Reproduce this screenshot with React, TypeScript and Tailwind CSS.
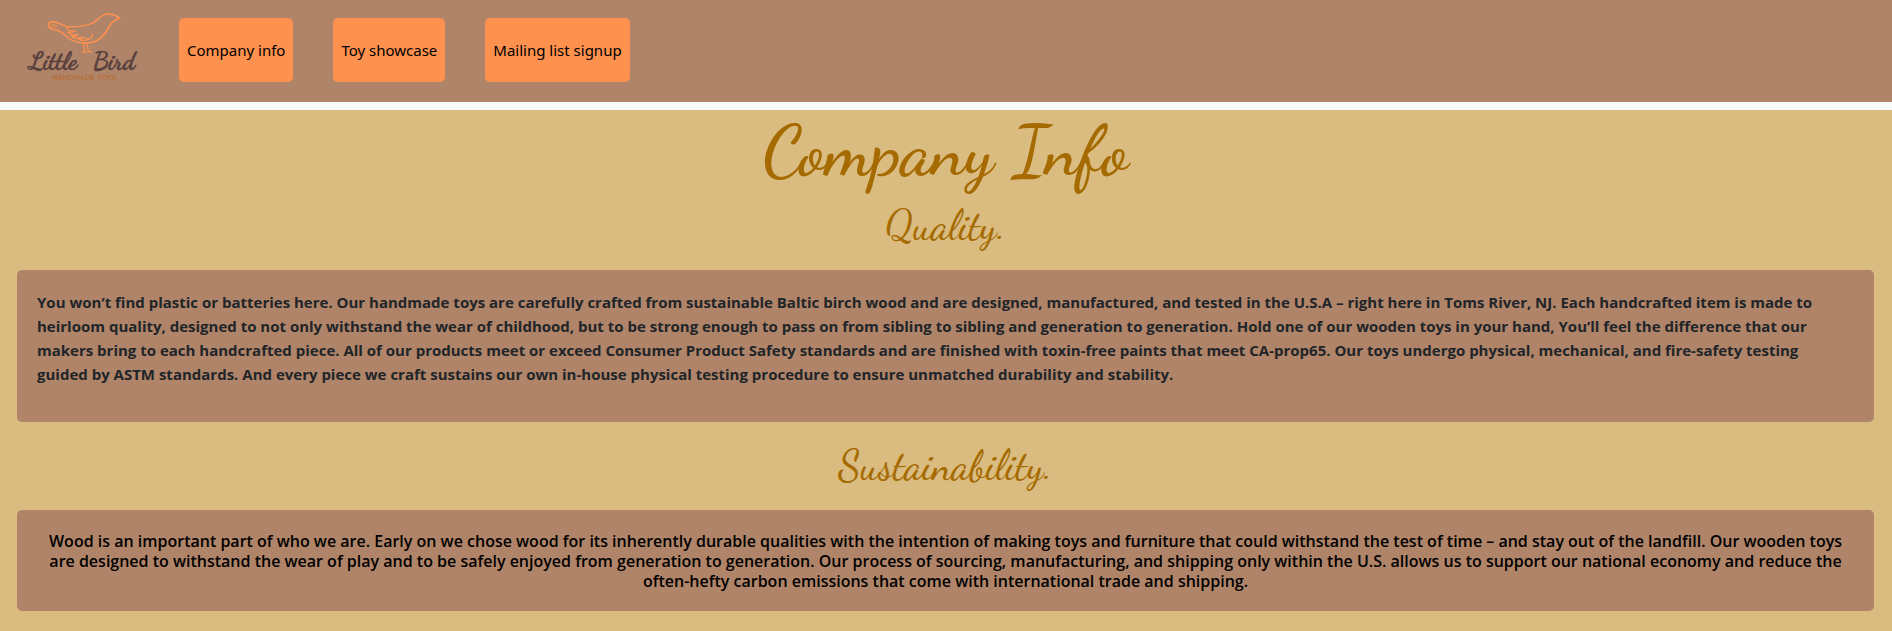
import type { ReactNode } from "react";

const links = [
  { label: "Company info", href: "#company-info" },
  { label: "Toy showcase", href: "#toy-showcase" },
  { label: "Mailing list signup", href: "#mailing-list" },
];

function Logo() {
  return (
    <svg viewBox="0 0 420 306" className="h-[102px] w-[140px]" role="img" aria-label="Little Bird handmade toys">
      <g fill="none" stroke="#fe914e" strokeWidth="4.5" strokeLinecap="round" strokeLinejoin="round">
        <path d="M155 80C185 81 215 77 232 70C248 63 256 42 280 42C294 42 304 47 314 54C302 59 293 64 286 74C276 92 266 112 244 123C222 132 190 130 171 121C154 112 145 98 132 93L111 87C99 84 97 71 106 66C116 62 128 68 155 80Z" />
        <path d="M155 80C155 90 166 94 181 93C173 97 163 98 158 96C163 105 176 106 190 103C184 109 174 110 169 108C176 116 192 116 204 111C200 116 195 119 190 118C208 124 232 121 233 102M204 111C212 117 219 118 225 116" strokeWidth="3.5" />
        <path d="M108 72L127 77M106 79L124 83" strokeWidth="2.5" />
        <path d="M206 129L208 155M217 129L219 153M204 156H213M219 153L229 156" strokeWidth="4" />
      </g>
      <g
        fill="#583f3e"
        stroke="#583f3e"
        strokeWidth="1.5"
        className="font-['Dancing_Script','Lato',cursive] text-[72px] font-bold"
      >
        <text x="42" y="207">Little</text>
        <text x="234" y="207">Bird</text>
      </g>
      <text x="207" y="240" textAnchor="middle" fill="#b5692f" className="font-['DejaVu_Sans',sans-serif] text-[22px]">
        HANDMADE TOYS
      </text>
    </svg>
  );
}

function SectionTitle({ children }: { children: ReactNode }) {
  return (
    <h2 className="text-center font-['Dancing_Script','Lato',cursive] text-[41px] leading-[88px] font-medium text-[#a56a00]">
      {children}
    </h2>
  );
}

export default function App() {
  return (
    <div className="flex min-h-screen flex-col bg-[#f8f9fa] font-['Segoe_UI','Open_Sans',sans-serif]">
      <header className="mb-2 flex gap-6 bg-[#b08468] pr-4 pl-[15px]">
        <a href="#home">
          <Logo />
        </a>
        <nav className="flex flex-wrap gap-10 pt-[18px] pb-5">
          {links.map((link) => (
            <a
              key={link.href}
              href={link.href}
              className="rounded-[5px] bg-[#fe914e] px-2 py-5 font-['Noto_Sans',sans-serif] text-[15px] leading-6 text-black"
            >
              {link.label}
            </a>
          ))}
        </nav>
      </header>

      <main className="grow bg-[#dabb80] pr-[18px] pb-5 pl-[17px]">
        <h1
          id="company-info"
          className="pt-3 text-center font-['Dancing_Script','Lato',cursive] text-[71px] leading-[60px] font-semibold text-[#a56a00]"
        >
          Company Info
        </h1>

        <section>
          <SectionTitle>Quality.</SectionTitle>
          <div className="rounded-[5px] bg-[#b08468] py-5 pr-8 pl-5">
            <p className="mb-4 text-[15px] leading-6 font-bold text-[#212529]">
              You won’t find plastic or batteries here. Our handmade toys are carefully crafted from sustainable Baltic
              birch wood and are designed, manufactured, and tested in the U.S.A – right here in Toms River, NJ. Each
              handcrafted item is made to heirloom quality, designed to not only withstand the wear of childhood, but to
              be strong enough to pass on from sibling to sibling and generation to generation. Hold one of our wooden
              toys in your hand, You’ll feel the difference that our makers bring to each handcrafted piece. All of our
              products meet or exceed Consumer Product Safety standards and are finished with toxin-free paints that
              meet CA-prop65. Our toys undergo physical, mechanical, and fire-safety testing guided by ASTM standards.
              And every piece we craft sustains our own in-house physical testing procedure to ensure unmatched
              durability and stability.
            </p>
          </div>
        </section>

        <section>
          <SectionTitle>Sustainability.</SectionTitle>
          <div className="rounded-[5px] bg-[#b08468] px-5 pt-[21px] pb-5">
            <p className="text-center text-[16px] leading-[20px] font-semibold text-black">
              Wood is an important part of who we are. Early on we chose wood for its inherently durable qualities with
              the intention of making toys and furniture that could withstand the test of time – and stay out of the
              landfill. Our wooden toys are designed to withstand the wear of play and to be safely enjoyed from
              generation to generation. Our process of sourcing, manufacturing, and shipping only within the U.S. allows
              us to support our national economy and reduce the often-hefty carbon emissions that come with
              international trade and shipping.
            </p>
          </div>
        </section>
      </main>
    </div>
  );
}
